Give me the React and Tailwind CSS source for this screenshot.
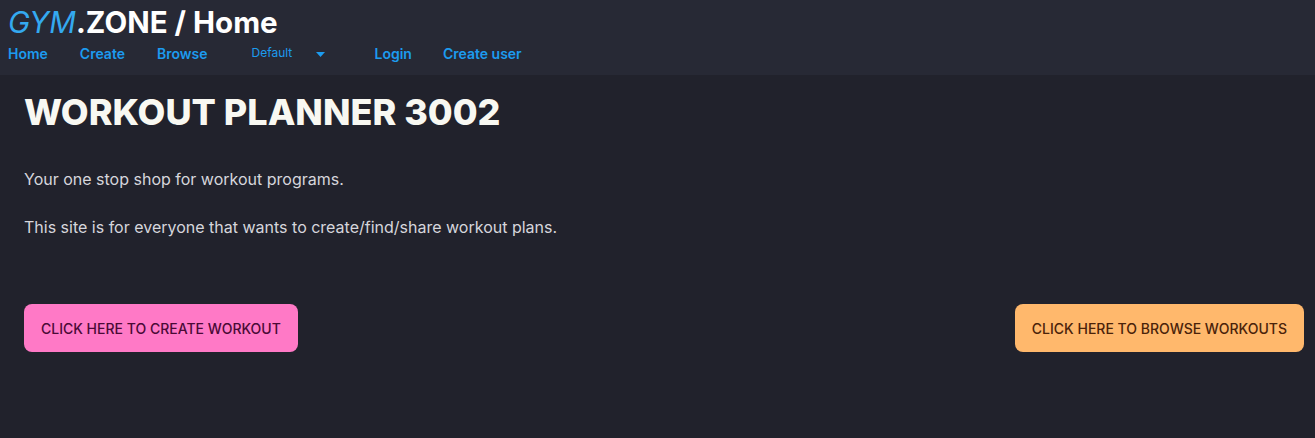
export default function App() {
  return (
    <div className="min-h-[438px] bg-[#21222c] font-['Inter',sans-serif]">
      <header className="h-[75px] bg-[#272935] px-2 pt-[4px]">
        <h1 className="text-[29.5px] leading-[37px] font-bold text-white">
          <span className="italic font-normal text-[#34a9f0]">GYM</span>.ZONE / Home
        </h1>
        <nav className="flex items-center h-[24px] text-[14px] font-semibold text-[#1c9bef]">
          <a className="mr-[32px]">Home</a>
          <a className="mr-[32px]">Create</a>
          <a className="mr-[44px]">Browse</a>
          <div className="flex items-center mr-[49px]">
            <span className="text-[12px] font-normal w-[65px]">Default</span>
            <svg width="9" height="5" viewBox="0 0 9 5" className="mt-[3px]">
              <path d="M0 0h9L4.5 5z" fill="#1c9bef" />
            </svg>
          </div>
          <a className="mr-[31px]">Login</a>
          <a>Create user</a>
        </nav>
      </header>
      <main className="pl-6 pr-[11px] pt-[14px]">
        <h2 className="text-[36px] leading-[46px] font-extrabold text-[#f8f8f2]">WORKOUT PLANNER 3002</h2>
        <p className="mt-[32px] text-[16px] leading-6 text-[#d6d6dc]">Your one stop shop for workout programs.</p>
        <p className="mt-6 text-[16px] leading-6 text-[#d6d6dc]">
          This site is for everyone that wants to create/find/share workout plans.
        </p>
        <div className="mt-[65px] flex justify-between">
          <button className="h-12 px-[17px] rounded-lg bg-[#ff79c6] text-[14px] font-medium text-[#4a0a36]">
            CLICK HERE TO CREATE WORKOUT
          </button>
          <button className="h-12 px-[17px] rounded-lg bg-[#ffb86c] text-[14px] font-medium text-[#4a230a]">
            CLICK HERE TO BROWSE WORKOUTS
          </button>
        </div>
      </main>
    </div>
  );
}
